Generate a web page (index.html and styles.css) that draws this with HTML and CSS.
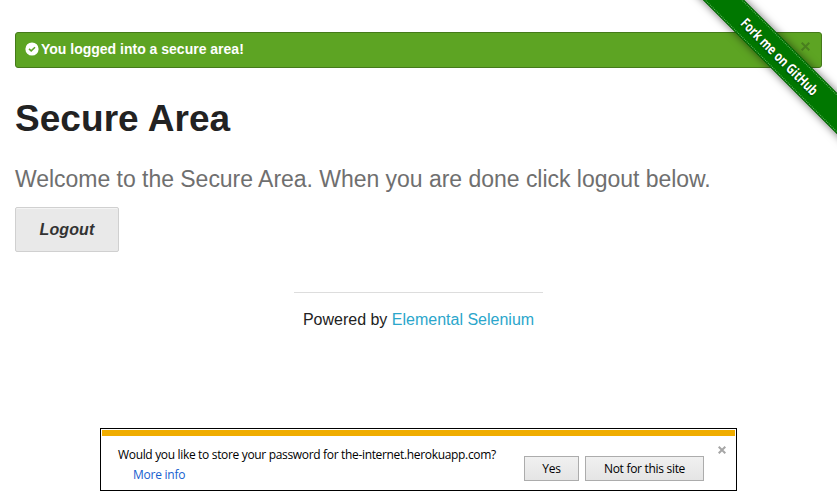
FILE: index.html
```html
<!DOCTYPE html>
<html lang="en">
<head>
<meta charset="utf-8">
<title>The Internet</title>
<link rel="stylesheet" href="styles.css">
</head>
<body>
<div class="alert">
  <svg class="check" viewBox="0 0 14 14"><circle cx="7" cy="7" r="6.6" fill="#fff"/><path d="M4 6.9 6.2 8.9 10 5.2" fill="none" stroke="#5da423" stroke-width="1.5"/></svg>
  <span class="alert-text">You logged into a secure area!</span>
  <svg class="alert-close" viewBox="0 0 9 9"><path d="M.7 .7 8.3 8.3M8.3 .7 .7 8.3"/></svg>
</div>
<main>
  <h1><span>Secure Area</span></h1>
  <h4><span class="welcome">Welcome to the Secure Area. When you are done click logout below.</span></h4>
  <a class="logout">Logout</a>
</main>
<footer>
  <div class="powered">Powered by <a>Elemental Selenium</a></div>
</footer>
<section class="dialog">
  <div class="strip"></div>
  <div class="dialog-body">
    <div class="message">
      <div class="question">Would you like to store your password for the-internet.herokuapp.com?</div>
      <a class="more">More info</a>
    </div>
    <div class="actions">
      <button class="yes">Yes</button>
      <button class="never">Not for this site</button>
    </div>
    <svg class="dialog-close" viewBox="0 0 8 8"><path d="M.7 .7 7.3 7.3M7.3 .7 .7 7.3"/></svg>
  </div>
</section>
<div class="ribbon-area"><div class="ribbon"><span>Fork me on GitHub</span></div></div>
</body>
</html>
```
FILE: styles.css
```css
* { box-sizing: border-box; }
body {
  margin: 0;
  padding: 32px 15px 0;
  height: 491px;
  overflow: hidden;
  position: relative;
  background: #fff;
  color: #222;
  font-family: "Liberation Sans", Arial, sans-serif;
}
.alert {
  display: flex;
  align-items: center;
  height: 36px;
  padding: 0 11px 2px 9px;
  background: #5da423;
  border: 1px solid #457a1a;
  border-radius: 3px;
  color: #fff;
  font-size: 14px;
  font-weight: bold;
}
.check { width: 14px; height: 14px; margin-right: 2px; }
.alert-text { letter-spacing: 0; }
.alert-close {
  width: 9px;
  height: 9px;
  margin: -5px 0 0 auto;
  fill: none;
  stroke: #4a801f;
  stroke-width: 2;
}
h1 { margin: 25px 0 0; font-size: 37px; line-height: 52px; letter-spacing: 0.05px; }
h4 {
  margin: 18px 0 0;
  color: #6f6f6f;
  font-size: 23px;
  font-weight: normal;
  line-height: 32px;
  letter-spacing: -0.03px;
  white-space: nowrap;
}
.logout {
  display: flex;
  align-items: center;
  justify-content: center;
  width: 104px;
  height: 45px;
  margin-top: 12px;
  background: #e9e9e9;
  border: 1px solid #d0d0d0;
  border-radius: 2px;
  box-shadow: inset 0 1px 0 rgba(255, 255, 255, .5);
  color: #333;
  font-size: 16px;
  font-style: italic;
  font-weight: bold;
  letter-spacing: 0.1px;
}
footer {
  width: 249px;
  margin: 40px auto 0;
  border-top: 1px solid #ddd;
  text-align: center;
}
.powered { margin-top: 14px; font-size: 16px; line-height: 26px; white-space: nowrap; }
.powered a { color: #2ba6cb; }
.dialog {
  width: 637px;
  height: 63px;
  margin: 95px 0 0 85px;
  padding: 1px;
  border: 1px solid #000;
  font-family: "Open Sans", "Segoe UI", sans-serif;
  font-size: 12px;
  color: #000;
}
.strip { height: 6px; background: #f0ad00; }
.dialog-body { display: flex; padding-left: 16px; }
.message { width: 406px; padding-top: 9px; line-height: 20px; }
.question { white-space: nowrap; letter-spacing: -0.33px; }
.more { margin-left: 15px; color: #1660cf; letter-spacing: -0.25px; }
.actions { display: flex; gap: 6px; padding-top: 20px; }
button {
  height: 25px;
  padding: 0;
  border: 1px solid #acacac;
  background: linear-gradient(#f0f0f0, #e5e5e5);
  font: inherit;
  letter-spacing: -0.3px;
  color: #000;
}
.yes { width: 55px; }
.never { width: 119px; }
.dialog-close {
  width: 8px;
  height: 8px;
  margin: 10px 0 0 14px;
  fill: none;
  stroke: #a6a6a6;
  stroke-width: 2;
}
.ribbon-area {
  position: absolute;
  top: 0;
  right: 0;
  width: 149px;
  height: 149px;
  overflow: hidden;
}
.ribbon {
  position: absolute;
  left: -23px;
  top: 42px;
  width: 230px;
  height: 29px;
  display: flex;
  align-items: center;
  justify-content: center;
  background: #070;
  border: 1px solid #006800;
  box-shadow: 0 0 9px rgba(0, 0, 0, .6);
  transform: rotate(45deg);
  color: #fff;
  font: bold 14px/27px "Open Sans", sans-serif;
  white-space: nowrap;
}
.ribbon::before {
  content: "";
  position: absolute;
  inset: 0 -1px;
  border: dotted #62b562;
  border-width: 1px 0;
}
.ribbon span { transform: scaleX(.78); text-shadow: 0 1px 2px rgba(0, 0, 0, .5); }
```
